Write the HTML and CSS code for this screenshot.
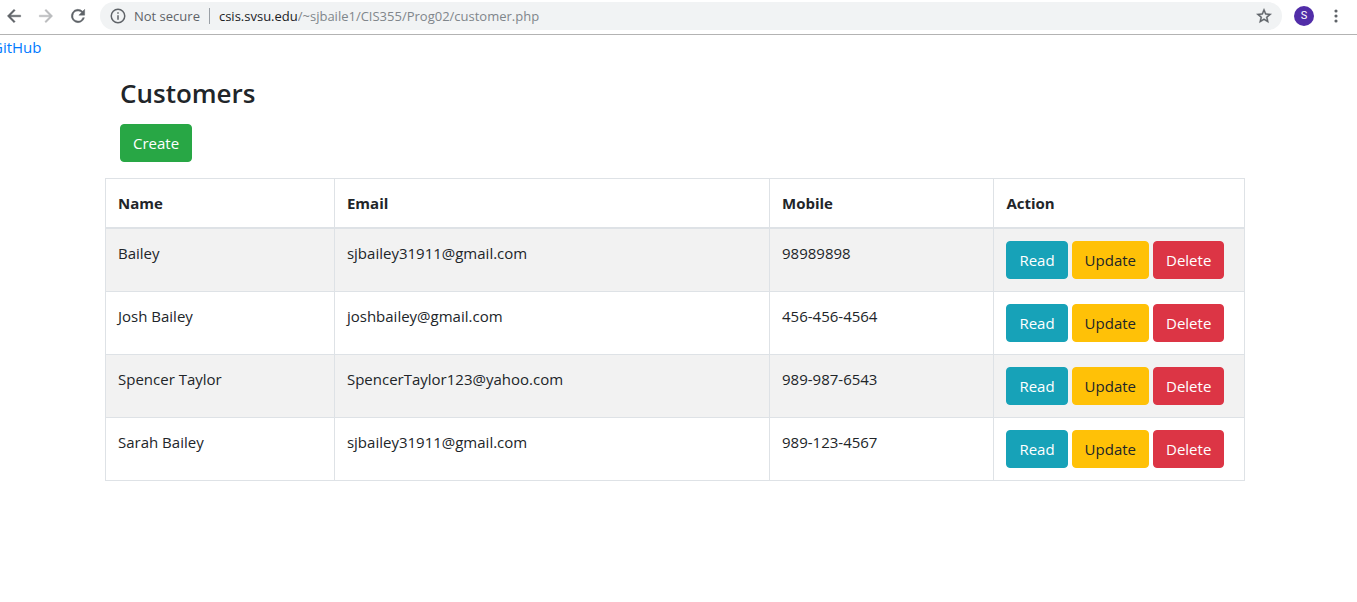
FILE: index.html
```html
<!DOCTYPE html>
<html lang="en">
<head>
<meta charset="utf-8">
<title>Customers</title>
<link rel="stylesheet" href="styles.css">
</head>
<body>
<header class="toolbar">
  <button class="tool" type="button" aria-label="Back">
    <svg class="bold" viewBox="0 0 24 24" width="20" height="20"><path d="M20 11H7.8l5.6-5.6L12 4l-8 8 8 8 1.4-1.4L7.8 13H20z"/></svg>
  </button>
  <button class="tool tool-off" type="button" aria-label="Forward">
    <svg class="bold" viewBox="0 0 24 24" width="20" height="20"><path d="M12 4l-1.4 1.4 5.6 5.6H4v2h12.2l-5.6 5.6L12 20l8-8z"/></svg>
  </button>
  <button class="tool" type="button" aria-label="Reload">
    <svg class="bold" viewBox="0 0 24 24" width="20" height="20"><path d="M17.65 6.35A8 8 0 1 0 19.73 14h-2.08A6 6 0 1 1 12 6c1.66 0 3.14.69 4.22 1.78L13 11h7V4z"/></svg>
  </button>
  <div class="address">
    <svg viewBox="0 0 24 24" width="18" height="18"><path d="M11 17h2v-6h-2zM11 9h2V7h-2zM12 2a10 10 0 1 0 0 20 10 10 0 0 0 0-20zm0 18a8 8 0 1 1 0-16 8 8 0 0 1 0 16z"/></svg>
    <span class="security">Not secure</span>
    <label class="host" for="url">csis.svsu.edu</label>
    <input class="path" id="url" type="text" value="/~sjbaile1/CIS355/Prog02/customer.php">
    <button class="star" type="button" aria-label="Bookmark">
      <svg class="bold" viewBox="0 0 24 24" width="18" height="18"><path d="M22 9.24l-7.19-.62L12 2 9.19 8.63 2 9.24l5.46 4.73L5.82 21 12 17.27 18.18 21l-1.63-7.03zM12 15.4l-3.76 2.27 1-4.28-3.32-2.88 4.38-.38L12 6.1l1.71 4.04 4.38.38-3.32 2.88 1 4.28z"/></svg>
    </button>
  </div>
  <button class="avatar" type="button" aria-label="Profile">S</button>
  <button class="tool" type="button" aria-label="Menu">
    <svg viewBox="0 0 24 24" width="20" height="20"><circle cx="12" cy="6" r="1.9"/><circle cx="12" cy="12" r="1.9"/><circle cx="12" cy="18" r="1.9"/></svg>
  </button>
</header>
<main class="page">
  <nav class="bleed"><a class="link" href="#github">GitHub</a></nav>
  <div class="container">
    <div class="intro">
      <h3 class="title">Customers</h3>
      <a class="btn btn-success" href="#create">Create</a>
    </div>
    <table class="table">
      <colgroup><col class="col-name"><col class="col-email"><col class="col-mobile"><col class="col-action"></colgroup>
      <thead>
        <tr><th>Name</th><th>Email</th><th>Mobile</th><th>Action</th></tr>
      </thead>
      <tbody>
        <tr><td>Bailey</td><td>sjbailey31911@gmail.com</td><td>98989898</td>
          <td><div class="actions"><a class="btn btn-info" href="#read">Read</a><a class="btn btn-warning" href="#update">Update</a><a class="btn btn-danger" href="#delete">Delete</a></div></td></tr>
        <tr><td>Josh Bailey</td><td>joshbailey@gmail.com</td><td>456-456-4564</td>
          <td><div class="actions"><a class="btn btn-info" href="#read">Read</a><a class="btn btn-warning" href="#update">Update</a><a class="btn btn-danger" href="#delete">Delete</a></div></td></tr>
        <tr><td>Spencer Taylor</td><td>SpencerTaylor123@yahoo.com</td><td>989-987-6543</td>
          <td><div class="actions"><a class="btn btn-info" href="#read">Read</a><a class="btn btn-warning" href="#update">Update</a><a class="btn btn-danger" href="#delete">Delete</a></div></td></tr>
        <tr><td>Sarah Bailey</td><td>sjbailey31911@gmail.com</td><td>989-123-4567</td>
          <td><div class="actions"><a class="btn btn-info" href="#read">Read</a><a class="btn btn-warning" href="#update">Update</a><a class="btn btn-danger" href="#delete">Delete</a></div></td></tr>
      </tbody>
    </table>
  </div>
</main>
</body>
</html>
```
FILE: styles.css
```css
*, *::before, *::after { box-sizing: border-box; }

body {
  margin: 0;
  overflow-x: hidden;
  background: #fff;
  color: #212529;
  font: 15px/24px "Open Sans", "Noto Sans", sans-serif;
}

button, input { border: 0; padding: 0; background: none; font: inherit; color: inherit; }
svg { display: block; fill: currentColor; }
.bold { stroke: currentColor; stroke-width: 0.5; }

/* Browser toolbar */
.toolbar {
  display: flex;
  align-items: center;
  gap: 12px;
  height: 35px;
  padding: 0 11px 2px 4px;
  border-bottom: 1px solid #b3b3b3;
  color: #5f6368;
  font-size: 13px;
}
.tool { flex: none; }
.tool-off { color: #babcbe; }
.address {
  flex: 1;
  display: flex;
  align-items: center;
  height: 28px;
  padding: 0 9px;
  border-radius: 14px;
  background: #f1f3f4;
}
.security {
  margin-left: 7px;
  padding-right: 9px;
  border-right: 1px solid #9aa0a6;
  line-height: 16px;
}
.host { margin-left: 9px; color: #202124; }
.path { flex: 1; min-width: 0; color: #80868b; }
.avatar {
  flex: none;
  width: 20px;
  height: 20px;
  border-radius: 50%;
  background: #512da8;
  color: #fff;
  font: 11px/20px Roboto, sans-serif;
}

/* Page */
.page { padding-right: 7px; }
.bleed { margin-left: -8px; }
.link { color: #007bff; text-decoration: none; }
.container { max-width: 1140px; margin: 0 auto; padding-top: 17px; }
.intro { display: flow-root; padding: 0 15px; margin-bottom: 16px; }
.title { margin: 0 0 14px; font-size: 26px; line-height: 34px; font-weight: 600; }

.btn {
  display: inline-block;
  padding: 6px 12px;
  border: 1px solid;
  border-radius: 4px;
  text-align: center;
  text-decoration: none;
  vertical-align: top;
  color: #fff;
}
.btn-success { background: #28a745; border-color: #28a745; }
.btn-info { background: #17a2b8; border-color: #17a2b8; }
.btn-warning { background: #ffc107; border-color: #ffc107; color: #212529; }
.btn-danger { background: #dc3545; border-color: #dc3545; }
.actions { display: flex; gap: 4px; }

.table { width: 100%; table-layout: fixed; border-collapse: collapse; border: 1px solid #dee2e6; }
.table th, .table td { padding: 12px; border: 1px solid #dee2e6; text-align: left; vertical-align: top; }
.table thead th { border-bottom-width: 2px; font-weight: 700; }
.table tbody tr:nth-child(odd) { background: #f2f2f2; }
.col-name { width: 20.1%; }
.col-email { width: 38.2%; }
.col-mobile { width: 19.7%; }
.col-action { width: 22%; }
```
